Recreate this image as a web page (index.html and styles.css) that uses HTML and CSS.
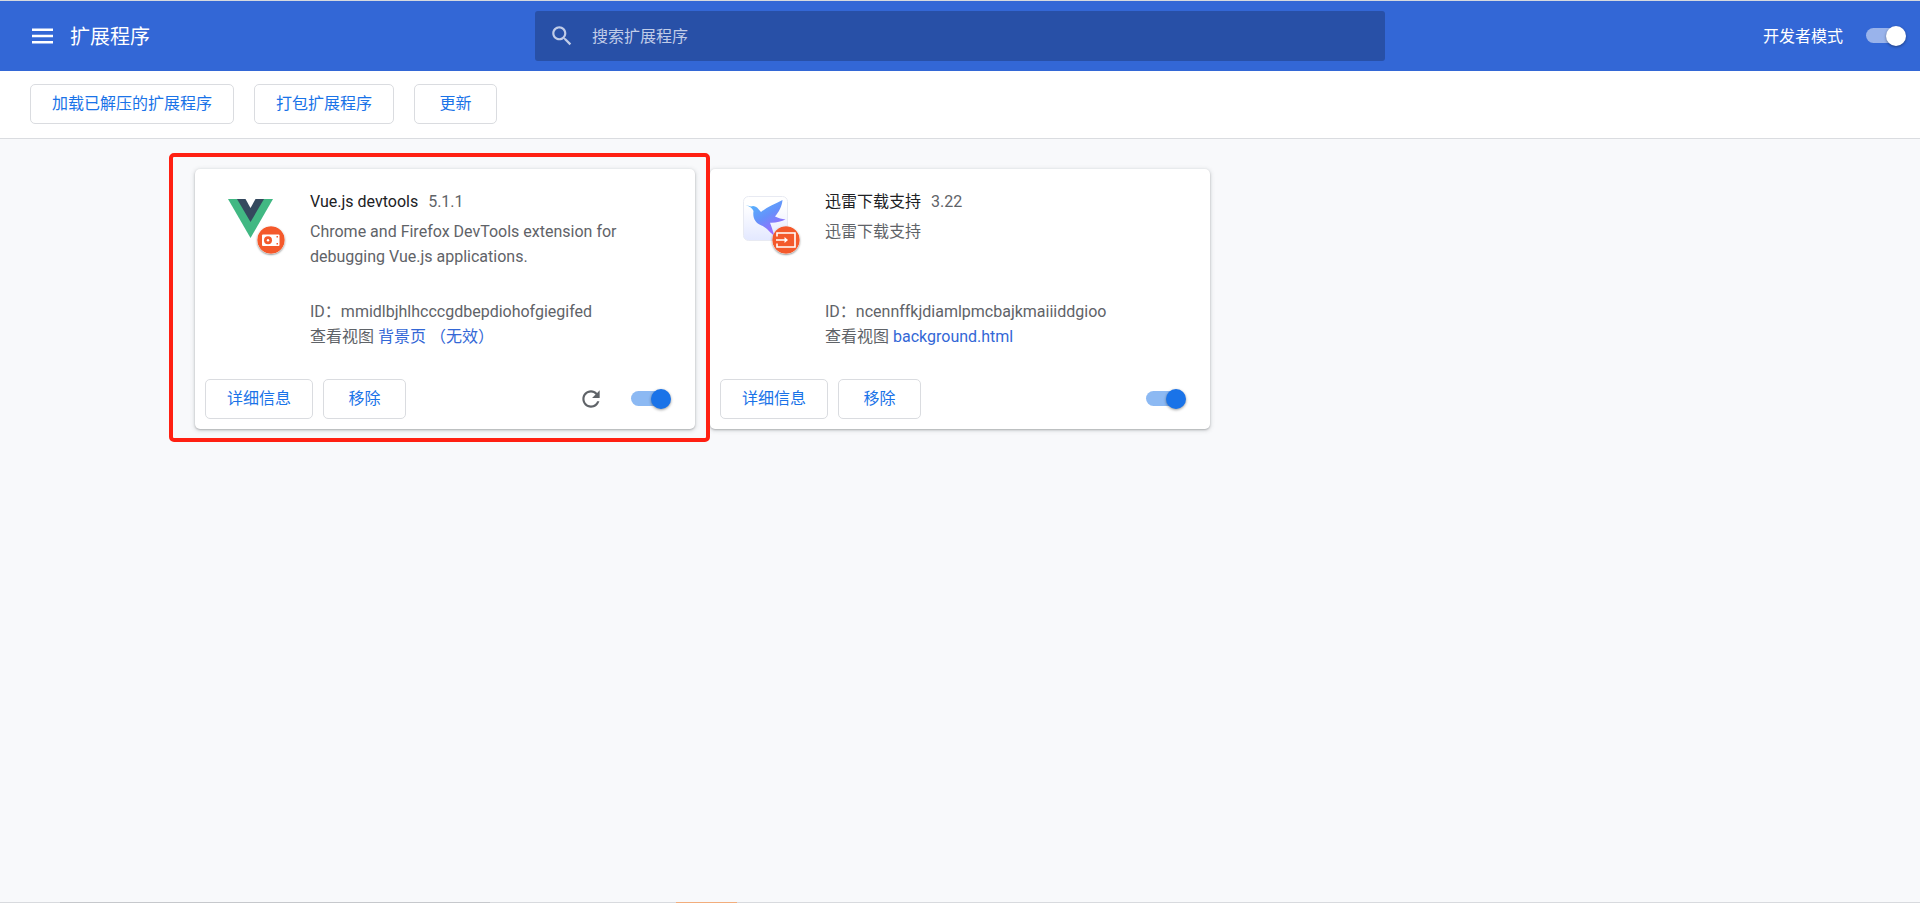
FILE: index.html
```
<!DOCTYPE html>
<html lang="zh-CN">
<head>
<meta charset="utf-8">
<title>扩展程序</title>
<link rel="stylesheet" href="styles.css">
</head>
<body>
<header class="topbar">
  <div class="topbar-left">
    <button class="icon-button menu-button" type="button" aria-label="主菜单">
      <svg width="21" height="16" viewBox="0 0 21 16" fill="#fff"><path d="M0 .5h21v2.4H0zM0 6.8h21v2.4H0zM0 13.1h21v2.4H0z"/></svg>
    </button>
    <h1 class="page-title">扩展程序</h1>
  </div>
  <label class="search">
    <svg class="search-icon" width="26" height="26" viewBox="0 0 24 24" fill="currentColor"><path d="M15.5 14h-.79l-.28-.27C15.41 12.59 16 11.11 16 9.5 16 5.91 13.09 3 9.5 3S3 5.91 3 9.5 5.91 16 9.5 16c1.61 0 3.09-.59 4.23-1.57l.27.28v.79l5 4.99L20.49 19l-4.99-5zm-6 0C7.01 14 5 11.99 5 9.5S7.01 5 9.5 5 14 7.01 14 9.5 11.99 14 9.5 14z"/></svg>
    <input class="search-input" type="search" placeholder="搜索扩展程序" aria-label="搜索扩展程序">
  </label>
  <div class="topbar-right">
    <label class="dev-label" for="dev-mode">开发者模式</label>
    <input class="toggle toggle-light" id="dev-mode" type="checkbox" checked>
  </div>
</header>
<nav class="toolbar">
  <button class="button" type="button">加载已解压的扩展程序</button>
  <button class="button" type="button">打包扩展程序</button>
  <button class="button" type="button">更新</button>
</nav>
<main class="content">
  <div class="cards">
    <article class="card card-marked">
      <div class="card-main">
        <div class="card-icon">
          <svg width="45" height="45" viewBox="0 0 45 45"><path fill="#41b883" d="M0 3h45L22.500 42z"/><path fill="#34495e" d="M9 3h27L22.500 26z"/><path fill="#fff" d="M17.500 3h10l-5 9z"/></svg>
          <svg class="badge" width="28" height="28" viewBox="0 0 28 28"><circle cx="14" cy="14" r="13.700" fill="#f4592b"/><rect x="5" y="8.500" width="17.500" height="11.500" rx="1" fill="#fff"/><circle cx="11" cy="14.200" r="4" fill="#f4592b"/><circle cx="11" cy="14.200" r="1.200" fill="#fff"/><path fill="#f4592b" d="M19.500 10h1.500v1.500h-1.500zM19.500 17h1.500v1.500h-1.500z"/></svg>
        </div>
        <div class="card-text">
          <h2 class="name">Vue.js devtools <span class="version">5.1.1</span></h2>
          <p class="description">Chrome and Firefox DevTools extension for debugging Vue.js applications.</p>
          <p class="line">ID：mmidlbjhlhcccgdbepdiohofgiegifed</p>
          <p class="line">查看视图 <a class="link" href="#">背景页 （无效）</a></p>
        </div>
      </div>
      <div class="card-actions">
        <button class="button" type="button">详细信息</button>
        <button class="button" type="button">移除</button>
        <button class="icon-button reload" type="button" aria-label="重新加载">
          <svg width="26" height="26" viewBox="0 0 24 24" fill="#5f6368"><path d="M17.650 6.350C16.200 4.900 14.210 4 12 4c-4.420 0-7.990 3.580-7.990 8s3.570 8 7.990 8c3.730 0 6.840-2.550 7.730-6h-2.080c-.82 2.330-3.040 4-5.650 4-3.310 0-6-2.690-6-6s2.690-6 6-6c1.660 0 3.140.69 4.220 1.780L13 11h7V4l-2.350 2.350z"/></svg>
        </button>
        <input class="toggle" type="checkbox" checked aria-label="Vue.js devtools">
      </div>
    </article>
    <article class="card">
      <div class="card-main">
        <div class="card-icon">
          <svg width="45" height="45" viewBox="0 0 45 45">
            <defs>
              <linearGradient id="tile" x1="0" y1="0" x2="0" y2="1"><stop offset=".2" stop-color="#fff"/><stop offset="1" stop-color="#e3e8ff"/></linearGradient>
              <linearGradient id="bird" x1="0" y1="0" x2=".7" y2="1"><stop offset="0" stop-color="#4fc0ff"/><stop offset=".55" stop-color="#6690fa"/><stop offset="1" stop-color="#a565ff"/></linearGradient>
            </defs>
            <rect x=".5" y=".5" width="44" height="44" rx="5" fill="url(#tile)" stroke="#e8eaf2"/>
            <path fill="url(#bird)" d="M2.500 9 8 10.500C10 9.500 12 10 14 11.500l4 4.500C24 11 32 8 39.500 4 39 10 36 16 32 20.500c3 1.500 7 2.500 10.500 3-4 2-10 3.500-15.500 3.200 1.500 4 3 8 4 12.800-5-4-8-8.500-12.500-10C12 27 9.500 22 10.500 15 9.500 12 6 10 2.500 9z"/>
          </svg>
          <svg class="badge" width="28" height="28" viewBox="0 0 28 28"><circle cx="14" cy="14" r="13.700" fill="#f4592b"/><path fill="none" stroke="#fff" stroke-width="1.600" d="M5 10.500V7h18v14H5v-3.500"/><path stroke="#fff" stroke-width="1.600" d="M4 14h9"/><path fill="#fff" d="M12.500 11v6l3.500-3z"/></svg>
        </div>
        <div class="card-text">
          <h2 class="name">迅雷下载支持 <span class="version">3.22</span></h2>
          <p class="description">迅雷下载支持</p>
          <p class="line">ID：ncennffkjdiamlpmcbajkmaiiiddgioo</p>
          <p class="line">查看视图 <a class="link" href="#">background.html</a></p>
        </div>
      </div>
      <div class="card-actions">
        <button class="button" type="button">详细信息</button>
        <button class="button" type="button">移除</button>
        <input class="toggle" type="checkbox" checked aria-label="迅雷下载支持">
      </div>
    </article>
  </div>
</main>
<div class="bottom-edge"></div>
</body>
</html>
```
FILE: styles.css
```
* { box-sizing: border-box; }

body {
  margin: 0;
  min-height: 100vh;
  display: flex;
  flex-direction: column;
  background: #f8f9fb;
  color: #5f6368;
  font: 16px/25px Roboto, "Noto Sans CJK SC", sans-serif;
}

h1, h2, p { margin: 0; font-weight: 400; }
button, input { font: inherit; }

.topbar {
  display: flex;
  align-items: center;
  height: 71px;
  padding: 0 14px 0 32px;
  border-top: 1px solid #d6d9de;
  background: #3367d6;
  color: #fff;
}
.topbar-left, .topbar-right { flex: 1; display: flex; align-items: center; }
.topbar-left { gap: 17px; margin-right: -18px; }
.topbar-right { justify-content: flex-end; gap: 23px; }
.page-title { padding-top: 2px; font-size: 20px; line-height: 30px; }

.icon-button {
  display: flex;
  padding: 0;
  border: 0;
  background: none;
  cursor: pointer;
}

.search {
  display: flex;
  align-items: center;
  gap: 17px;
  flex: 0 1 850px;
  height: 50px;
  padding: 0 14px;
  border-radius: 3px;
  background: #2850a7;
  color: #c0cce8;
}
.search-icon { flex: none; }
.search-input {
  flex: 1;
  min-width: 0;
  padding: 0;
  border: 0;
  outline: 0;
  background: none;
  color: #fff;
}
.search-input::placeholder { color: #c0cce8; opacity: 1; }

.toolbar {
  display: flex;
  gap: 20px;
  padding: 13px 30px 14px;
  border-bottom: 1px solid #dadce0;
  background: #fff;
}

.button {
  min-width: 83px;
  height: 40px;
  padding: 0 20px;
  border: 1px solid #dadce0;
  border-radius: 5px;
  background: #fff;
  color: #1a73e8;
  line-height: 24px;
  cursor: pointer;
}
.toolbar .button { padding: 0 21px; }
.card-actions .button:first-child { min-width: 108px; }

.content { flex: 1; padding: 30px; }
.cards {
  display: grid;
  grid-template-columns: repeat(auto-fill, 500px);
  gap: 15px;
  max-width: 1530px;
  margin: 0 auto;
}

.card {
  position: relative;
  display: flex;
  flex-direction: column;
  min-height: 260px;
  border-radius: 5px;
  background: #fff;
  box-shadow: 0 1px 2px rgba(60, 64, 67, .3), 0 1px 4px 1px rgba(60, 64, 67, .15);
}
.card-marked { z-index: 1; }
.card-marked::after {
  content: "";
  position: absolute;
  inset: -16px -15px -13px -26px;
  border: 4px solid #ff2012;
  border-radius: 5px;
  pointer-events: none;
}

.card-main { flex: 1; display: flex; gap: 37px; padding: 20px 20px 0 33px; }
.card-icon { position: relative; flex: none; width: 45px; height: 45px; margin-top: 7px; }
.badge {
  position: absolute;
  top: 30px;
  left: 29px;
  border-radius: 50%;
  box-shadow: 0 1px 2px rgba(0, 0, 0, .4);
}
.card-text { flex: 1; }
.name { margin-bottom: 5px; color: #202124; font-size: 16px; }
.version { margin-left: 6px; color: #5f6368; }
.description { min-height: 50px; margin-bottom: 30px; padding-right: 40px; }
.link { color: #3367d6; text-decoration: none; }

.card-actions { display: flex; align-items: center; gap: 10px; padding: 10px 24px 10px 10px; }
.reload { margin-left: auto; margin-right: 17px; }

.toggle {
  appearance: none;
  position: relative;
  flex: none;
  width: 40px;
  height: 20px;
  margin: 0;
  color: #1a73e8;
  cursor: pointer;
}
.card-actions .toggle:not(.reload + .toggle) { margin-left: auto; }
.toggle::before {
  content: "";
  position: absolute;
  inset: 2px 5px 3px 0;
  border-radius: 8px;
  background: currentColor;
  opacity: .5;
}
.toggle::after {
  content: "";
  position: absolute;
  top: 0;
  right: 0;
  width: 20px;
  height: 20px;
  border-radius: 50%;
  background: currentColor;
  box-shadow: 0 1px 3px rgba(0, 0, 0, .4);
}
.toggle-light { color: #fff; }

.bottom-edge {
  height: 1px;
  background: linear-gradient(90deg, #d8dade 60px, #c6c8cc 60px 490px, #d8dade 490px 676px, #f2ad7c 676px 737px, #d8dade 737px);
}
```
